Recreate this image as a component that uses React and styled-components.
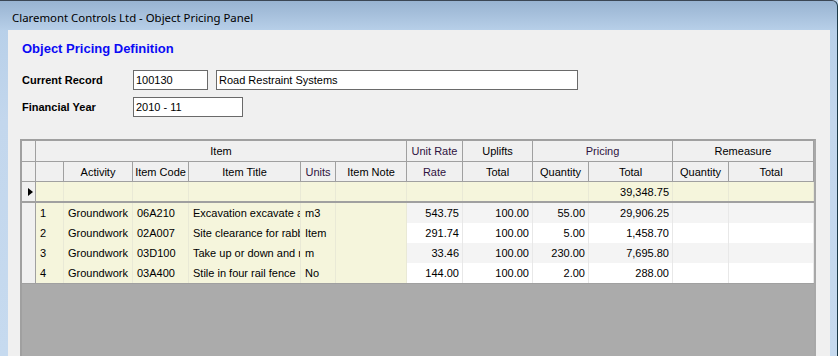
import React from 'react';
import styled, { createGlobalStyle } from 'styled-components';

const GlobalStyle = createGlobalStyle`
  html, body { margin: 0; padding: 0; background: #c2d7ed; }
  body { font-family: "Liberation Sans", Arial, sans-serif; }
  #root { width: 838px; height: 356px; }
`;

const COLS = '14px 28px 69px 56px 112px 35px 71px 56px 70px 56px 84px 56px 85px';

const Window = styled.div`
  width: 838px;
  height: 356px;
  box-sizing: border-box;
  display: flex;
  flex-direction: column;
  overflow: hidden;
  background: linear-gradient(to bottom, #98b3d1 0px, #b8d0e9 30px, #c3d7ed 120px, #c6daef 100%);
  border-top: 1px solid #3b4654;
  border-right: 1px solid #1c3a48;
  border-top-right-radius: 6px;
`;

const TitleBar = styled.div`
  height: 29px;
  box-sizing: border-box;
  padding: 9px 0 0 12px;
  font-family: "Noto Sans", "Open Sans", sans-serif;
  font-size: 11.4px;
  line-height: 16px;
  color: #000;
  white-space: nowrap;
`;

const Frame = styled.div`
  flex: 1;
  display: flex;
  min-height: 0;
  padding: 0 7px 0 8px;
`;

const Client = styled.div`
  flex: 1;
  display: flex;
  flex-direction: column;
  min-height: 0;
  background: #f0f0f0;
  padding: 11px 0 0 12px;
`;

const Heading = styled.h1`
  margin: 0 0 0 2px;
  font-family: "Liberation Sans", Arial, sans-serif;
  font-size: 13px;
  line-height: 15px;
  font-weight: bold;
  color: #0a0af5;
`;

const Form = styled.div`
  margin: 14px 0 0 2px;
  display: flex;
  flex-direction: column;
  gap: 7px;
`;

const FieldRow = styled.div`
  display: flex;
  align-items: center;
  height: 20px;
  gap: 8px;
`;

const Label = styled.span`
  width: 103px;
  font-size: 11px;
  font-weight: bold;
  color: #000;
`;

const TextBox = styled.div`
  width: ${(p) => p.$w}px;
  height: 20px;
  box-sizing: border-box;
  border: 1px solid #6a6a6a;
  background: #fff;
  font-size: 11px;
  line-height: 18px;
  padding: 0 2px;
  color: #000;
  white-space: nowrap;
  overflow: hidden;
`;

const GridFrame = styled.div`
  margin-top: 22px;
  width: 796px;
  flex: 1;
  box-sizing: border-box;
  border: 2px solid #a0a0a0;
  border-bottom: none;
  border-right-color: #a8a8a8;
  background: #ababab;
  display: flex;
  flex-direction: column;
`;

const GridRow = styled.div`
  display: grid;
  grid-template-columns: ${COLS};
  height: ${(p) => p.$h}px;
  box-sizing: border-box;
  border-bottom: ${(p) => (p.$line ? `${p.$line}px solid #a0a0a0` : 'none')};
`;

const HeadCell = styled.div`
  grid-column: ${(p) => p.$span || 'auto'};
  background: #f0f0f0;
  border-right: 1px solid #a0a0a0;
  box-sizing: border-box;
  font-size: 11px;
  color: ${(p) => (p.$tint ? '#2e1240' : '#000')};
  display: flex;
  align-items: center;
  justify-content: center;
  white-space: nowrap;
  overflow: hidden;
`;

const tones = {
  beige: '#f5f5dc',
  gray: '#f4f4f4',
  white: '#ffffff',
  head: '#f0f0f0',
};

const Cell = styled.div`
  background: ${(p) => tones[p.$tone]};
  border-right: 1px solid ${(p) => (p.$tone === 'head' ? '#a0a0a0' : p.$tone === 'beige' ? '#e9e9d6' : '#e8e8e8')};
  box-sizing: border-box;
  font-size: 11px;
  color: #000;
  display: flex;
  align-items: center;
  justify-content: ${(p) => (p.$right ? 'flex-end' : p.$center ? 'center' : 'flex-start')};
  padding: ${(p) => (p.$right ? '0 3px 0 0' : '0 0 0 4px')};
  white-space: nowrap;
  overflow: hidden;
`;

const Arrow = styled.span`
  width: 0;
  height: 0;
  border-left: 5px solid #000;
  border-top: 4px solid transparent;
  border-bottom: 4px solid transparent;
  margin-left: -1px;
`;

const Filler = styled.div`
  flex: 1;
  border-top: 1px solid #a0a0a0;
  background: #ababab;
`;

const rows = [
  { n: '1', code: '06A210', title: 'Excavation excavate and dispose', units: 'm3', rate: '543.75', up: '100.00', qty: '55.00', total: '29,906.25' },
  { n: '2', code: '02A007', title: 'Site clearance for rabbit fencing', units: 'Item', rate: '291.74', up: '100.00', qty: '5.00', total: '1,458.70' },
  { n: '3', code: '03D100', title: 'Take up or down and remove', units: 'm', rate: '33.46', up: '100.00', qty: '230.00', total: '7,695.80' },
  { n: '4', code: '03A400', title: 'Stile in four rail fence', units: 'No', rate: '144.00', up: '100.00', qty: '2.00', total: '288.00' },
];

export default function App() {
  return (
    <>
      <GlobalStyle />
      <Window>
        <TitleBar>Claremont Controls Ltd - Object Pricing Panel</TitleBar>
        <Frame>
          <Client>
            <Heading>Object Pricing Definition</Heading>
            <Form>
              <FieldRow>
                <Label>Current Record</Label>
                <TextBox $w={75}>100130</TextBox>
                <TextBox $w={362}>Road Restraint Systems</TextBox>
              </FieldRow>
              <FieldRow>
                <Label>Financial Year</Label>
                <TextBox $w={110}>2010 - 11</TextBox>
              </FieldRow>
            </Form>
            <GridFrame>
              <GridRow $h={21} $line={1}>
                <HeadCell />
                <HeadCell $span="2 / 8">Item</HeadCell>
                <HeadCell $tint>Unit Rate</HeadCell>
                <HeadCell>Uplifts</HeadCell>
                <HeadCell $span="10 / 12" $tint>Pricing</HeadCell>
                <HeadCell $span="12 / 14">Remeasure</HeadCell>
              </GridRow>
              <GridRow $h={20} $line={1}>
                <HeadCell />
                <HeadCell />
                <HeadCell>Activity</HeadCell>
                <HeadCell>Item Code</HeadCell>
                <HeadCell>Item Title</HeadCell>
                <HeadCell $tint>Units</HeadCell>
                <HeadCell>Item Note</HeadCell>
                <HeadCell $tint>Rate</HeadCell>
                <HeadCell>Total</HeadCell>
                <HeadCell>Quantity</HeadCell>
                <HeadCell>Total</HeadCell>
                <HeadCell>Quantity</HeadCell>
                <HeadCell>Total</HeadCell>
              </GridRow>
              <GridRow $h={21} $line={2}>
                <Cell $tone="head" $center><Arrow /></Cell>
                {Array.from({ length: 9 }).map((_, i) => (
                  <Cell key={i} $tone="beige" />
                ))}
                <Cell $tone="beige" $right>39,348.75</Cell>
                <Cell $tone="beige" />
                <Cell $tone="beige" />
              </GridRow>
              {rows.map((r, i) => {
                const alt = i % 2 === 0 ? 'gray' : 'white';
                return (
                  <GridRow key={r.n} $h={20}>
                    <Cell $tone="head" />
                    <Cell $tone="beige">{r.n}</Cell>
                    <Cell $tone="beige">Groundwork</Cell>
                    <Cell $tone="beige">{r.code}</Cell>
                    <Cell $tone="beige">{r.title}</Cell>
                    <Cell $tone="beige">{r.units}</Cell>
                    <Cell $tone="beige" />
                    <Cell $tone={alt} $right>{r.rate}</Cell>
                    <Cell $tone={alt} $right>{r.up}</Cell>
                    <Cell $tone={alt} $right>{r.qty}</Cell>
                    <Cell $tone={alt} $right>{r.total}</Cell>
                    <Cell $tone={alt} />
                    <Cell $tone={alt} />
                  </GridRow>
                );
              })}
              <Filler />
            </GridFrame>
          </Client>
        </Frame>
      </Window>
    </>
  );
}
